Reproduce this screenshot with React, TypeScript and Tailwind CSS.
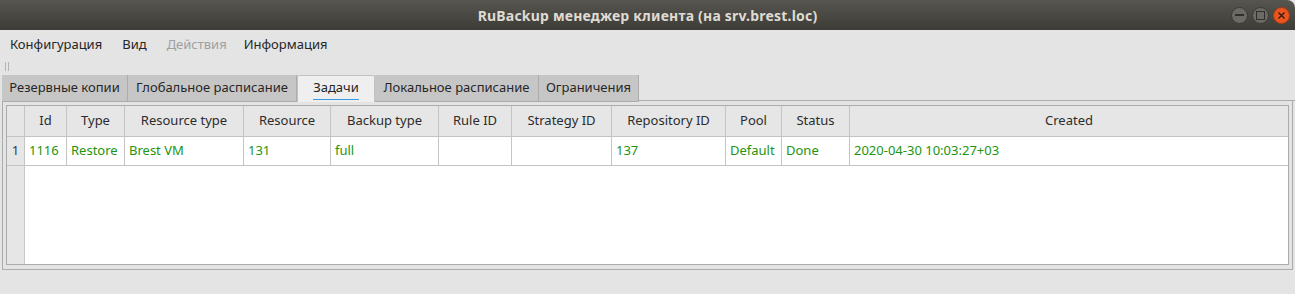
import React from 'react';

interface Column {
  title: string;
  width: string;
}

const columns: Column[] = [
  { title: 'Id', width: 'w-[42px]' },
  { title: 'Type', width: 'w-[58px]' },
  { title: 'Resource type', width: 'w-[119px]' },
  { title: 'Resource', width: 'w-[87px]' },
  { title: 'Backup type', width: 'w-[108px]' },
  { title: 'Rule ID', width: 'w-[73px]' },
  { title: 'Strategy ID', width: 'w-[100px]' },
  { title: 'Repository ID', width: 'w-[114px]' },
  { title: 'Pool', width: 'w-[56px]' },
  { title: 'Status', width: 'w-[68px]' },
  { title: 'Created', width: 'flex-1' },
];

const row = ['1116', 'Restore', 'Brest VM', '131', 'full', '', '', '137', 'Default', 'Done', '2020-04-30 10:03:27+03'];

const tabs = [
  { name: 'Резервные копии', width: 'w-[126px]' },
  { name: 'Глобальное расписание', width: 'w-[169px]' },
  { name: 'Задачи', width: 'w-[78px]', active: true },
  { name: 'Локальное расписание', width: 'w-[164px]' },
  { name: 'Ограничения', width: 'w-[100px]' },
];

const menu = [
  { name: 'Конфигурация', pad: 'px-[10px]' },
  { name: 'Вид', pad: 'px-[10px]' },
  { name: 'Действия', pad: 'pl-[10px] pr-[7px]', disabled: true },
  { name: 'Информация', pad: 'px-[10px]' },
];

function WindowButtons() {
  return (
    <div className="flex items-center gap-[4px] pr-[5px]">
      <div className="w-[17px] h-[17px] rounded-full bg-[#6b6a65] border border-[#3a3935] flex items-center justify-center">
        <div className="w-[9px] h-[2px] bg-[#302f2b]" />
      </div>
      <div className="w-[17px] h-[17px] rounded-full bg-[#6b6a65] border border-[#3a3935] flex items-center justify-center">
        <div className="w-[9px] h-[9px] border-[1.5px] border-[#302f2b]" />
      </div>
      <div className="w-[17px] h-[17px] rounded-full bg-[#e9541f] border border-[#a83a13] flex items-center justify-center">
        <svg width="9" height="9" viewBox="0 0 9 9">
          <path d="M1.5 1.5 L7.5 7.5 M7.5 1.5 L1.5 7.5" stroke="#3a1a0c" strokeWidth="1.4" />
        </svg>
      </div>
    </div>
  );
}

export default function App() {
  return (
    <div className="w-[1295px] h-[294px] bg-[#e4e4e4] overflow-hidden flex flex-col text-[13px] text-[#303030]" style={{ fontFamily: '"Noto Sans", "DejaVu Sans", sans-serif' }}>
      {/* title bar */}
      <div className="h-[30px] shrink-0 bg-gradient-to-b from-[#57554f] to-[#3d3c37] rounded-tr-[8px] relative flex items-center justify-end">
        <div className="absolute inset-0 flex items-center justify-center text-[14px] font-bold text-[#dfdbd2] tracking-[0.2px]">
          RuBackup менеджер клиента (на srv.brest.loc)
        </div>
        <WindowButtons />
      </div>

      {/* menu */}
      <div className="h-[30px] shrink-0 flex items-center">
        {menu.map((m) => (
          <div key={m.name} className={`${m.pad} ${m.disabled ? 'text-[#a0a0a0]' : 'text-[#262626]'}`}>
            {m.name}
          </div>
        ))}
      </div>

      {/* toolbar handle */}
      <div className="h-[15px] shrink-0 flex items-start pt-[2px] pl-[5px] gap-[2px]">
        <div className="w-px h-[9px] bg-[#b4b4b4]" />
        <div className="w-px h-[9px] bg-[#b4b4b4]" />
      </div>

      {/* tabs */}
      <div className="h-[26px] shrink-0 flex pl-[2px] relative z-10">
        {tabs.map((t) => (
          <div
            key={t.name}
            className={`${t.width} h-[27px] flex items-center justify-center border-r border-[#acacac] ${
              t.active ? 'bg-[#efefef] border-l border-t border-[#c2c2c2] rounded-t-[2px]' : 'bg-[#c6c6c6] h-[26px] border-b border-[#acacac]'
            }`}
          >
            <span className={`pb-[1px] ${t.active ? 'border-b border-[#3d9ae0]' : ''} text-[#262626]`}>{t.name}</span>
          </div>
        ))}
        <div className="flex-1 border-b border-[#acacac] h-[26px]" />
      </div>

      {/* pane */}
      <div className="h-[169px] shrink-0 mx-[2px] border-l border-r border-b border-[#acacac] pt-[4px] pl-[3px] pr-[3px] pb-[3px] bg-[#e4e4e4]">
        <div className="h-[160px] border border-[#acacac] flex flex-col bg-white">
          {/* header */}
          <div className="h-[31px] flex bg-[#e6e6e6] border-b border-[#c4c4c4]">
            <div className="w-[18px] border-r border-[#c4c4c4]" />
            {columns.map((c) => (
              <div key={c.title} className={`${c.width} flex items-center justify-center border-r border-[#c4c4c4] last:border-r-0 text-[#2c2c2c]`}>
                {c.title}
              </div>
            ))}
          </div>
          {/* data row */}
          <div className="h-[29px] flex border-b border-[#c4c4c4]">
            <div className="w-[18px] bg-[#e6e6e6] border-r border-[#c4c4c4] flex items-center justify-center text-[#303848]">1</div>
            {columns.map((c, i) => (
              <div key={c.title} className={`${c.width} flex items-center pl-[4px] border-r border-[#c4c4c4] last:border-r-0 text-[#22940f] whitespace-nowrap`}>
                {row[i]}
              </div>
            ))}
          </div>
          {/* empty area */}
          <div className="flex-1 flex">
            <div className="w-[18px] bg-[#e6e6e6] border-r border-[#c8c8c8]" />
            <div className="flex-1 bg-white" />
          </div>
        </div>
      </div>
    </div>
  );
}
